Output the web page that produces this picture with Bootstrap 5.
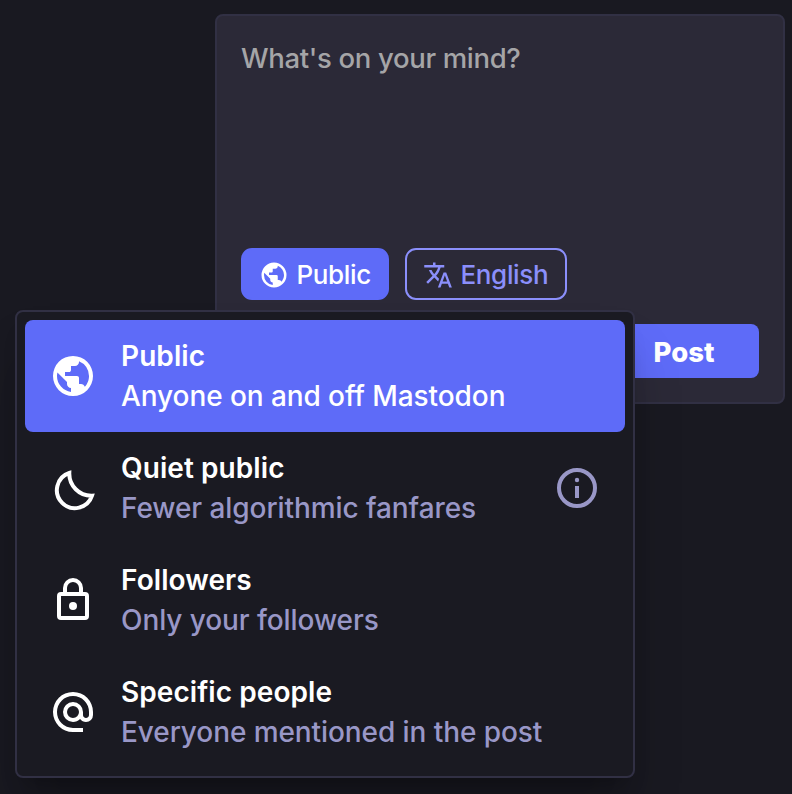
<!DOCTYPE html>
<html lang="en">
<head>
<meta charset="utf-8">
<meta name="viewport" content="width=device-width, initial-scale=1">
<title>Compose post</title>
<link href="https://cdn.jsdelivr.net/npm/bootstrap@5.3.0/dist/css/bootstrap.min.css" rel="stylesheet">
<style>
  body { background: #191921; font-family: Inter, "Liberation Sans", sans-serif; font-weight: 450; overflow: hidden; }
  .stage { width: 792px; height: 794px; padding: 14px 7px 0 215px; }
  .composer { height: 390px; background: #2b2937; border: 2px solid #313044; border-radius: 8px; padding: 24px; }
  .prompt { font-size: 27.5px; line-height: 36px; color: #a5a5a7; height: 208px; letter-spacing: -.33px; }
  .chip { height: 52px; border: 2px solid #5e6bf8; border-radius: 11px; padding: 2px 0 0 16px; font-size: 26px; font-weight: 450; line-height: 1; letter-spacing: -.35px; gap: 7.5px; }
  .chip svg { width: 30px; height: 30px; margin-top: -1px; flex: none; }
  .chip-fill { width: 148px; background: #5e6bf8; color: #fff; }
  .chip-line { width: 162px; border-color: #8b8ffb; color: #8b8ffb; }
  .send { width: 150px; height: 54px; padding-top: 4px; background: #5e6bf8; color: #fff; border-radius: 8px; font-size: 27.5px; font-weight: 800; line-height: 1; margin-top: 24px; }
  .privacy { position: absolute; left: 15px; top: 310px; width: 620px; height: 468px; padding: 8px; background: #1a1a22; border: 2px solid #313044; border-radius: 8px; box-shadow: 0 40px 50px -10px rgba(0,0,0,.25), 0 16px 20px -12px rgba(0,0,0,.25); }
  .choice { height: 112px; padding: 16px 24px; border-radius: 8px; color: #9997c7; font-size: 28px; line-height: 40px; letter-spacing: -.08px; }
  .choice strong { display: block; font-weight: 600; color: #fff; letter-spacing: .07px; }
  .choice svg { width: 48px; height: 48px; flex: none; }
  .choice .sign { color: #fff; margin-right: 24px; }
  .choice.picked { background: #5e6bf8; color: #fff; }
</style>
<script src="https://cdn.jsdelivr.net/npm/bootstrap@5.3.0/dist/js/bootstrap.bundle.min.js"></script>
</head>
<body>
<svg width="0" height="0" class="position-absolute" aria-hidden="true">
  <symbol id="globe" viewBox="0 -960 960 960"><path fill="currentColor" d="M480-80q-83 0-156-31.5T197-197q-54-54-85.5-127T80-480q0-83 31.5-156T197-763q54-54 127-85.5T480-880q83 0 156 31.5T763-763q54 54 85.5 127T880-480q0 83-31.5 156T763-197q-54 54-127 85.5T480-80Zm-40-82v-78q-33 0-56.5-23.5T360-320v-40L168-552q-3 18-5.5 36t-2.5 36q0 121 79.5 212T440-162Zm276-102q20-22 36-47.5t26.5-53q10.5-27.5 16-56.5t5.5-59q0-98-54.5-179T600-776v16q0 33-23.5 56.5T520-680h-80v80q0 17-11.5 28.5T400-560h-80v80h240q17 0 28.5 11.5T600-440v120h40q26 0 47 15.5t29 40.5Z"/></symbol>
</svg>
<main class="stage position-relative">
  <section class="composer d-flex flex-column">
    <div class="prompt">What's on your mind?</div>
    <div class="d-flex gap-3">
      <button type="button" class="chip chip-fill d-flex align-items-center"><svg><use href="#globe"/></svg><span>Public</span></button>
      <button type="button" class="chip chip-line bg-transparent d-flex align-items-center"><svg viewBox="0 -960 960 960" fill="currentColor"><path d="m476-80 182-480h84L924-80h-84l-43-122H603L560-80h-84ZM160-200l-56-56 202-202q-35-35-63.5-80T190-640h84q20 39 40 68t48 58q33-33 68.5-92.5T484-720H40v-80h280v-80h80v80h280v80H564q-21 72-63 148t-83 116l96 98-30 82-122-125-202 201Zm468-72h144l-72-204-72 204Z"/></svg><span>English</span></button>
    </div>
    <button type="button" class="send border-0 align-self-end">Post</button>
  </section>

  <div class="privacy" role="listbox">
    <div class="choice picked d-flex align-items-center" role="option" aria-selected="true">
      <svg class="sign"><use href="#globe"/></svg>
      <div class="flex-grow-1"><strong>Public</strong>Anyone on and off Mastodon</div>
    </div>
    <div class="choice d-flex align-items-center" role="option">
      <svg class="sign" viewBox="0 0 48 48" fill="none" stroke="currentColor" stroke-width="4"><path d="M20.3 9A18 18 0 1 0 43 31.7A22 22 0 0 1 20.3 9Z"/></svg>
      <div class="flex-grow-1"><strong>Quiet public</strong>Fewer algorithmic fanfares</div>
      <svg viewBox="0 0 48 48" fill="currentColor"><circle cx="24" cy="24" r="18" fill="none" stroke="currentColor" stroke-width="4"/><circle cx="24" cy="16" r="2.2"/><path d="M22 22h4v12h-4z"/></svg>
    </div>
    <div class="choice d-flex align-items-center" role="option">
      <svg class="sign" viewBox="0 0 48 48" fill="none" stroke="currentColor" stroke-width="4"><rect x="10" y="18" width="28" height="24" rx="2"/><path d="M16 18v-6a8 8 0 0 1 16 0v6"/><circle cx="24" cy="30" r="4" fill="currentColor" stroke="none"/></svg>
      <div class="flex-grow-1"><strong>Followers</strong>Only your followers</div>
    </div>
    <div class="choice d-flex align-items-center" role="option">
      <svg class="sign" viewBox="0 -960 960 960" fill="currentColor"><path d="M480-80q-83 0-156-31.5T197-197q-54-54-85.5-127T80-480q0-83 31.5-156T197-763q54-54 127-85.5T480-880q83 0 156 31.5T763-763q54 54 85.5 127T880-480v58q0 59-40.5 100.5T740-280q-35 0-66-15t-52-43q-29 29-65.5 43.5T480-280q-83 0-141.5-58.5T280-480q0-83 58.5-141.5T480-680q83 0 141.5 58.5T680-480v58q0 26 17 44t43 18q26 0 43-18t17-44v-58q0-134-93-227t-227-93q-134 0-227 93t-93 227q0 134 93 227t227 93h200v80H480Zm85-315q35-35 35-85t-35-85q-35-35-85-35t-85 35q-35 35-35 85t35 85q35 35 85 35t85-35Z"/></svg>
      <div class="flex-grow-1"><strong>Specific people</strong>Everyone mentioned in the post</div>
    </div>
  </div>
</main>
</body>
</html>
